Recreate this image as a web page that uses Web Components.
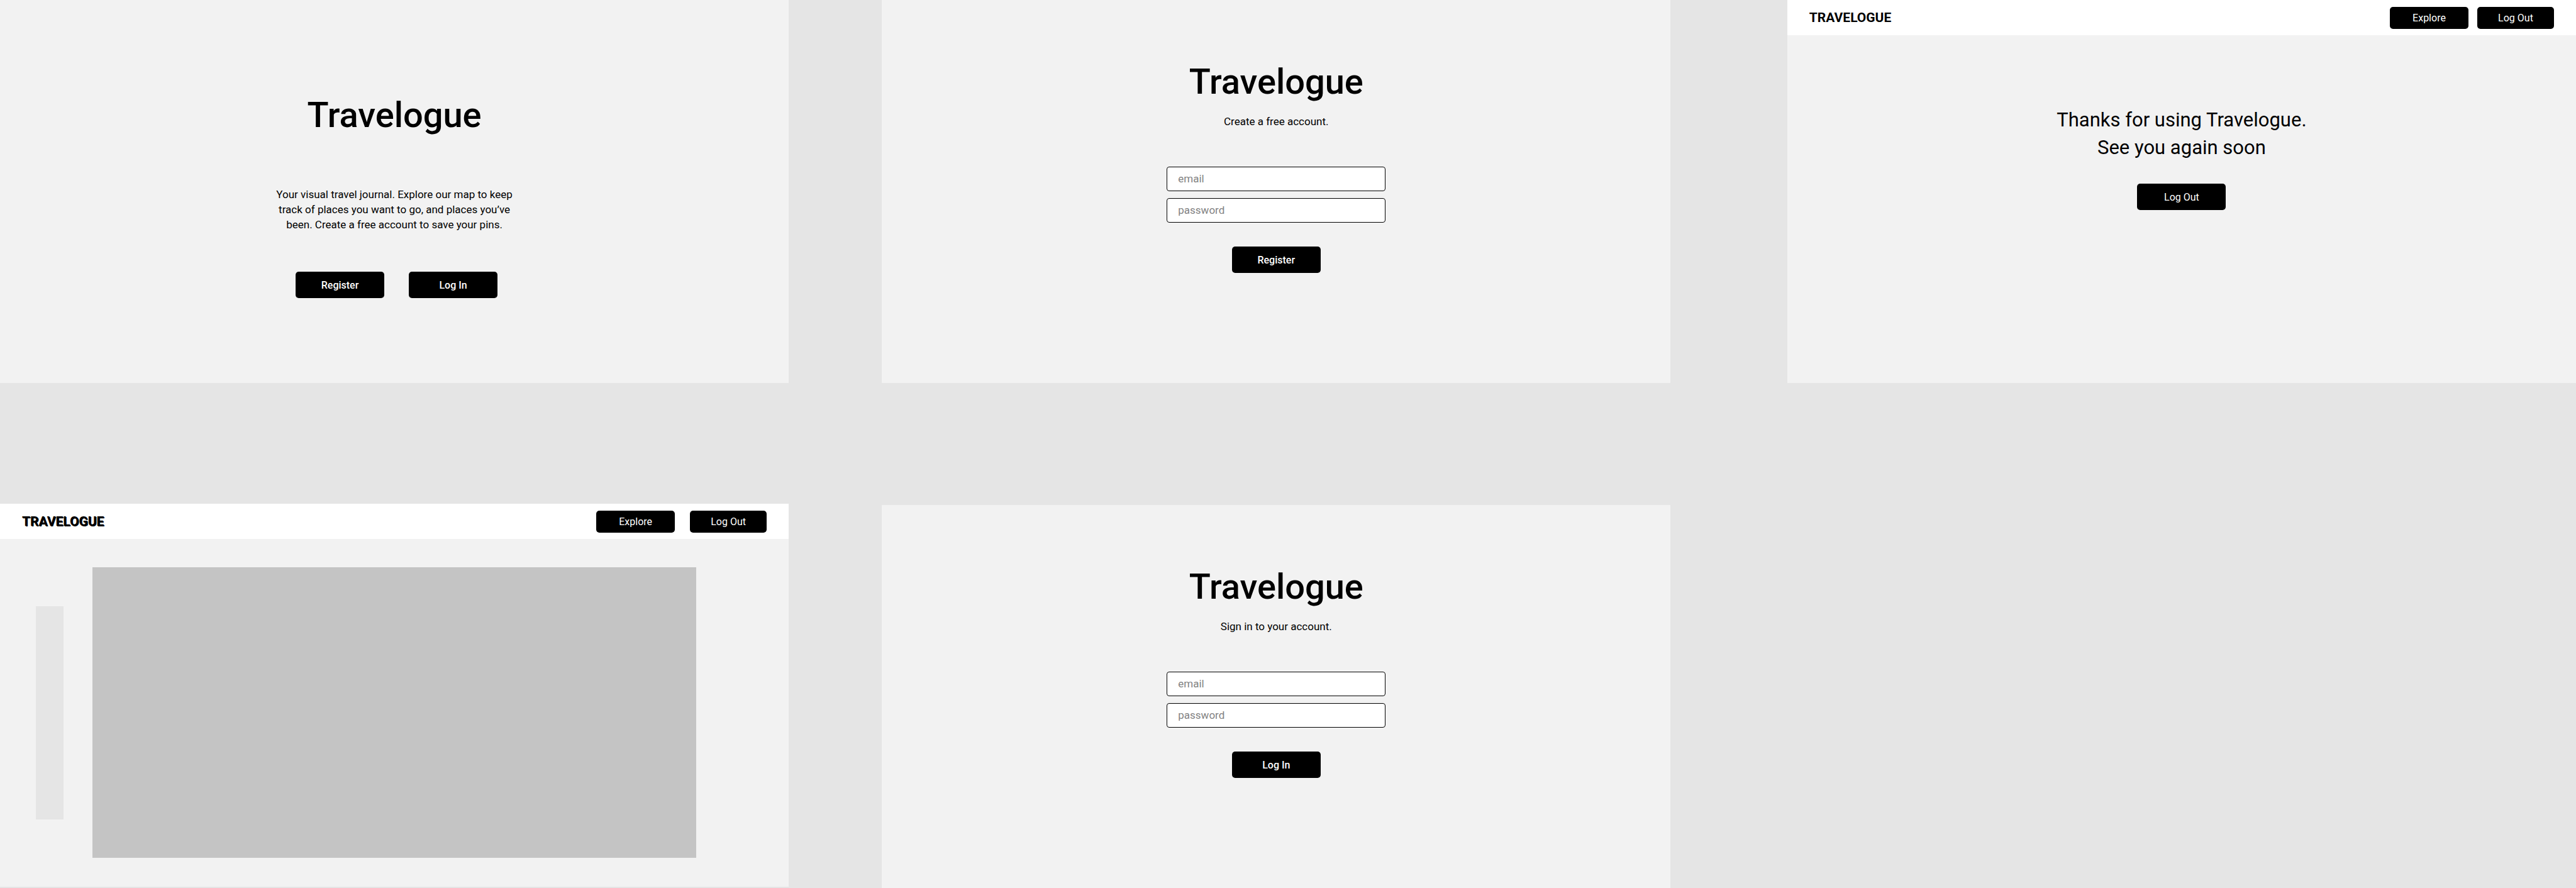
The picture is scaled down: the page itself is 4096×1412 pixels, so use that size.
<!DOCTYPE html>
<html lang="en">
<head>
<meta charset="utf-8">
<title>Travelogue wireframes</title>
<style>
  body { margin: 0; background: #e5e5e5; color: #000; font-family: Roboto, "Liberation Sans", sans-serif; }
</style>
</head>
<body>
<travel-canvas>
  <travel-home slot="first"></travel-home>
  <travel-explore slot="first"></travel-explore>
  <travel-auth slot="second" action="Register">Create a free account.</travel-auth>
  <travel-auth slot="second" action="Log In">Sign in to your account.</travel-auth>
  <travel-goodbye slot="third"></travel-goodbye>
</travel-canvas>

<script>
const define = (name, markup, setup) => {
  const template = document.createElement('template');
  template.innerHTML = `<style>*, ::before { box-sizing: border-box; } h1, p { margin: 0; }</style>${markup}`;
  customElements.define(name, class extends HTMLElement {
    constructor() {
      super();
      this.attachShadow({ mode: 'open' }).append(template.content.cloneNode(true));
    }
    connectedCallback() { if (setup) setup(this, this.shadowRoot); }
  });
};

// Three columns of boards on the grey canvas
define('travel-canvas', `
  <style>
    :host { display: grid; grid-template-columns: 1440fr 170fr 1440fr 213fr 1440fr; min-height: 100vh; }
    div { display: flex; flex-direction: column; gap: 192px; min-width: 0; }
    .second { grid-column: 3; gap: 194px; }
    .third { grid-column: 5; }
  </style>
  <div><slot name="first"></slot></div>
  <div class="second"><slot name="second"></slot></div>
  <div class="third"><slot name="third"></slot></div>
`);

define('travel-board', `
  <style>
    :host { display: flex; flex-direction: column; min-height: 609px; background: #f2f2f2; }
  </style>
  <slot></slot>
`);

define('travel-button', `
  <style>
    :host { display: block; width: 141px; height: 42px; }
    :host([size="nav"]) { width: 125px; height: 35px; }
    :host([size="nav-end"]) { width: 122px; height: 35px; }
    button { display: block; width: 100%; height: 100%; padding: 0; border: 0; border-radius: 5px;
      background: #000; color: #fff; font: inherit; font-size: 16px; font-weight: 400; cursor: pointer; }
    :host([strong]) button { font-weight: 500; }
  </style>
  <button type="button"><slot></slot></button>
`);

define('travel-title', `
  <style>
    :host { display: block; text-align: center; }
    h1 { font-size: 56px; line-height: 66px; font-weight: 500; }
  </style>
  <h1>Travelogue</h1>
`);

define('travel-nav', `
  <style>
    :host { display: block; --nav-gap: 14px; }
    :host([roomy]) { --nav-gap: 24px; }
    nav { display: flex; align-items: center; gap: var(--nav-gap); height: 56px; padding: 0 35px; background: #fff; }
    a { margin-right: auto; color: #000; font-size: 21px; line-height: 24px; font-weight: 700; text-decoration: none; }
    :host([heavy]) a { text-shadow: 1px 1px 0 #000; }
  </style>
  <nav>
    <a href="#">TRAVELOGUE</a>
    <travel-button size="nav">Explore</travel-button>
    <travel-button size="nav-end">Log Out</travel-button>
  </nav>
`);

define('travel-field', `
  <style>
    :host { display: block; }
    input { display: block; width: 100%; height: 39px; padding: 0 17px 2px; border: 1px solid #000; border-radius: 4px;
      background: #fff; color: #000; font: inherit; font-size: 17px; }
    input::placeholder { color: #828282; opacity: 1; }
  </style>
  <input>
`, (host, root) => {
  const input = root.querySelector('input');
  const kind = host.getAttribute('kind');
  input.type = kind;
  input.placeholder = kind;
  input.setAttribute('aria-label', kind);
});

define('travel-home', `
  <style>
    :host { display: block; }
    main { display: flex; flex-direction: column; align-items: center; padding-top: 150px; }
    section { width: 390px; margin-top: 81px; }
    p { font-size: 17px; line-height: 24px; text-align: center; }
    .actions { display: flex; gap: 39px; margin-top: 63px; padding-left: 38px; }
  </style>
  <travel-board>
    <main>
      <travel-title></travel-title>
      <section>
        <p>Your visual travel journal. Explore our map to keep<br>track of places you want to go, and places you’ve<br>been. Create a free account to save your pins.</p>
        <div class="actions">
          <travel-button strong>Register</travel-button>
          <travel-button strong>Log In</travel-button>
        </div>
      </section>
    </main>
  </travel-board>
`);

define('travel-auth', `
  <style>
    :host { display: block; }
    form { display: flex; flex-direction: column; align-items: center; padding-top: 97px; }
    p { margin-top: 18px; font-size: 17px; line-height: 24px; }
    .fields { display: grid; gap: 11px; width: 348px; margin: 60px 0 38px; }
  </style>
  <travel-board>
    <form>
      <travel-title></travel-title>
      <p><slot></slot></p>
      <div class="fields">
        <travel-field kind="email"></travel-field>
        <travel-field kind="password"></travel-field>
      </div>
      <travel-button strong></travel-button>
    </form>
  </travel-board>
`, (host, root) => {
  root.querySelector('travel-button').textContent = host.getAttribute('action');
});

define('travel-explore', `
  <style>
    :host { display: block; }
    main { display: flex; align-items: center; gap: 46px; padding: 45px 147px 46px 57px; }
    aside { flex: none; width: 44px; height: 339px; background: #e5e5e5; }
    .map { flex: 1; height: 462px; background: #c4c4c4; }
  </style>
  <travel-board>
    <travel-nav roomy heavy></travel-nav>
    <main><aside></aside><div class="map"></div></main>
  </travel-board>
`);

define('travel-goodbye', `
  <style>
    :host { display: block; }
    main { display: flex; flex-direction: column; align-items: center; gap: 35px; padding-top: 113px; }
    p { font-size: 31px; line-height: 44px; text-align: center; }
  </style>
  <travel-board>
    <travel-nav></travel-nav>
    <main>
      <p>Thanks for using Travelogue.<br>See you again soon</p>
      <travel-button>Log Out</travel-button>
    </main>
  </travel-board>
`);
</script>
</body>
</html>
